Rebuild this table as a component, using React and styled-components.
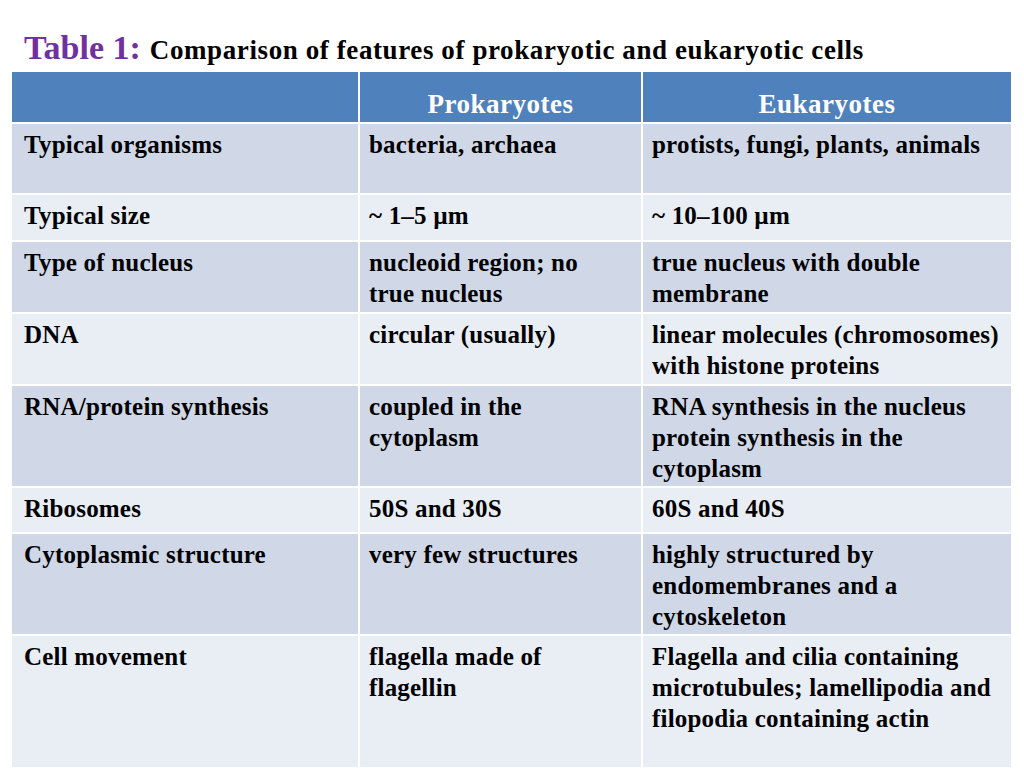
import React from 'react';
import styled, { createGlobalStyle } from 'styled-components';

const serif = `"Liberation Serif", Tinos, "Times New Roman", "DejaVu Serif", serif`;

const GlobalStyle = createGlobalStyle`
  html, body {
    margin: 0;
    padding: 0;
    background: #ffffff;
  }
`;

const Page = styled.div`
  width: 1024px;
  height: 768px;
  overflow: hidden;
  background: #ffffff;
  font-family: ${serif};
`;

const TitleBar = styled.div`
  height: 72px;
  box-sizing: border-box;
  padding: 28px 0 0 24px;
  display: flex;
  align-items: baseline;
  gap: 9px;
  white-space: nowrap;
  line-height: 40px;
`;

const TitleLabel = styled.span`
  color: #7030a0;
  font-size: 34px;
  font-weight: 700;
`;

const TitleText = styled.span`
  color: #000000;
  font-size: 27px;
  font-weight: 700;
  letter-spacing: 0.6px;
`;

const Table = styled.div`
  margin-left: 12px;
  width: 999px;
  display: grid;
  grid-template-columns: 346px 281px 368px;
  grid-template-rows: 50px 69px 45px 70px 70px 100px 44px 100px 131px;
  gap: 2px;
`;

const HeadCell = styled.div`
  background: #4f81bd;
  color: #ffffff;
  font-size: 27px;
  font-weight: 700;
  letter-spacing: 0.5px;
  text-align: center;
  line-height: 31px;
  padding-top: 17px;
  box-sizing: border-box;
`;

const Cell = styled.div`
  background: ${(p) => (p.$odd ? '#d0d8e8' : '#e9edf4')};
  color: #000000;
  font-size: 25px;
  font-weight: 700;
  letter-spacing: 0.2px;
  line-height: 31px;
  padding: 5px 6px 0 ${(p) => p.$pad || 9}px;
  box-sizing: border-box;
`;

const rows = [
  ['Typical organisms', 'bacteria, archaea', 'protists, fungi, plants, animals'],
  ['Typical size', '~ 1–5 µm', '~ 10–100 µm'],
  ['Type of nucleus', ['nucleoid region; no', 'true nucleus'], ['true nucleus with double', 'membrane']],
  ['DNA', 'circular (usually)', ['linear molecules (chromosomes)', 'with histone proteins']],
  ['RNA/protein synthesis', ['coupled in the', 'cytoplasm'], ['RNA synthesis in the nucleus', 'protein synthesis in the', 'cytoplasm']],
  ['Ribosomes', '50S and 30S', '60S and 40S'],
  ['Cytoplasmic structure', 'very few structures', ['highly structured by', 'endomembranes and a', 'cytoskeleton']],
  ['Cell movement', ['flagella made of', 'flagellin'], ['Flagella and cilia containing', 'microtubules; lamellipodia and', 'filopodia containing actin']],
];

const Line = styled.div`
  white-space: nowrap;
`;

function Content({ value }) {
  const lines = Array.isArray(value) ? value : [value];
  return lines.map((l, i) => <Line key={i}>{l}</Line>);
}

export default function App() {
  return (
    <Page>
      <GlobalStyle />
      <TitleBar>
        <TitleLabel>Table 1:</TitleLabel>
        <TitleText>Comparison of features of prokaryotic and eukaryotic cells</TitleText>
      </TitleBar>
      <Table>
        <HeadCell />
        <HeadCell>Prokaryotes</HeadCell>
        <HeadCell>Eukaryotes</HeadCell>
        {rows.map((row, r) =>
          row.map((value, c) => (
            <Cell key={`${r}-${c}`} $odd={r % 2 === 0} $pad={c === 0 ? 12 : 9}>
              <Content value={value} />
            </Cell>
          ))
        )}
      </Table>
    </Page>
  );
}
